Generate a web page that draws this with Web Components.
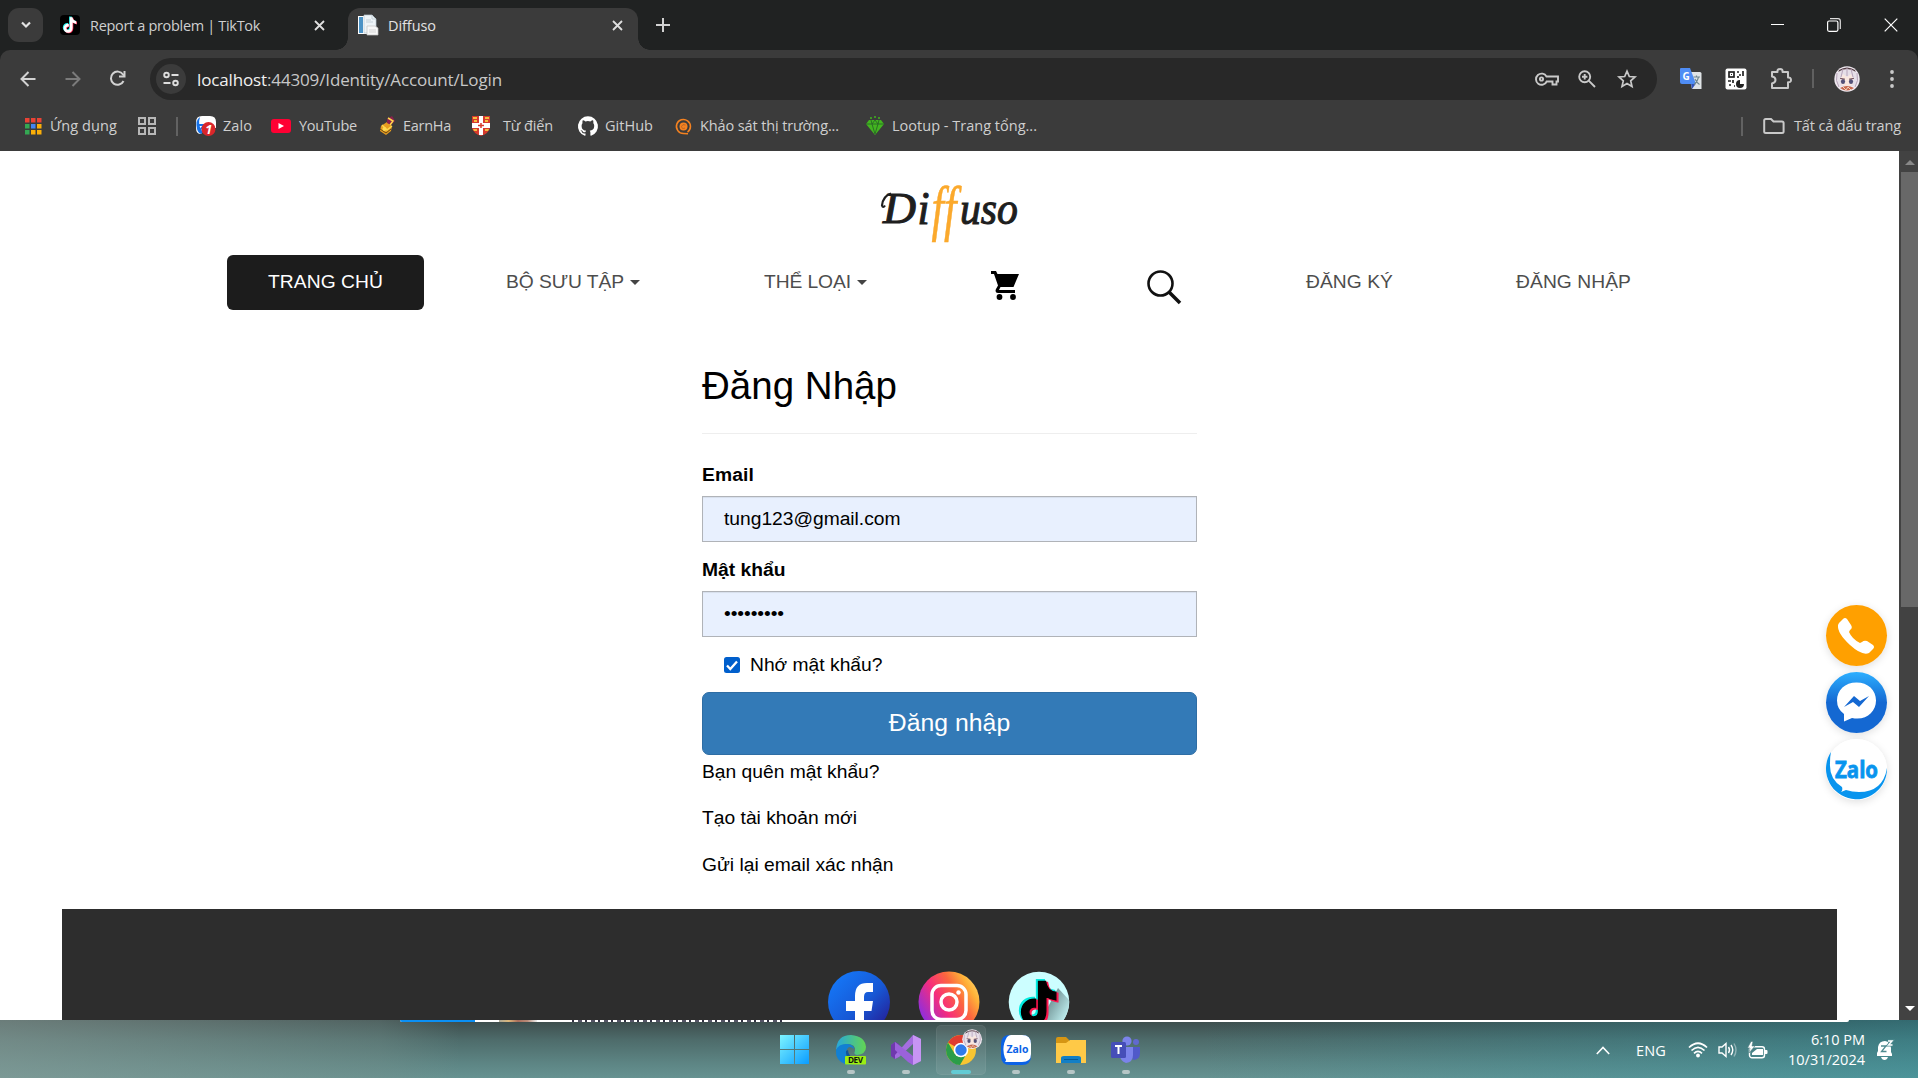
<!DOCTYPE html>
<html lang="vi">
<head>
<meta charset="utf-8">
<title>Diffuso</title>
<style>
html,body{margin:0;padding:0;background:#202222}
body{width:1918px;height:1078px;overflow:hidden;font-family:"Open Sans","Noto Sans",sans-serif}
</style>
</head>
<body>
<desktop-screen></desktop-screen>
<script>
const AVATAR = `<circle cx="13" cy="13" r="12.7" fill="#efe8ef"/><path d="M5 4Q13-1 21 4L22 7Q13 1 4 7Z" fill="#553f45"/><path d="M4 6Q13 0 22 6Q25 14 22 20H4Q1 14 4 6" fill="#e6dfe8"/><path d="M7 12L9 8L13 11L17 8L19 12V18Q13 22 7 18Z" fill="#f9e7df"/><path d="M3 7Q1 15 5 21M23 7Q25 15 21 21M9 3L7 11M13 2V10M17 3L19 11" stroke="#b7a4b9" fill="none"/><ellipse cx="9" cy="15.5" rx="2.100" ry="2.600" fill="#525078"/><ellipse cx="17" cy="15.5" rx="2.100" ry="2.600" fill="#525078"/><path d="M6 12.3L11 13.2M15 13.2L20 12.3" stroke="#714f5b"/><path d="M6 22Q13 18 20 22Q13 27 6 22" fill="#c8694e"/><path d="M9 21L12 24L14 21L17 24" stroke="#f2d2bd" fill="none"/>`;
const NOTE = 'M10.2 3h2.6c.3 2.3 1.6 3.7 3.8 3.9v2.7c-1.400-.1-2.600-.6-3.700-1.300v5.400c0 3-2 4.700-4.500 4.700-2.600 0-4.500-2-4.500-4.500 0-2.700 2.200-4.700 5.200-4.500v2.800c-1.500-.3-2.500.6-2.500 1.700 0 1 .8 1.800 1.800 1.800 1.200 0 1.800-.8 1.800-2.100Z';
const ICONS = {
chevdown:[14,14,`<path d="M3 4.500L7 8.500L11 4.500" fill="none" stroke="#e3e3e3" stroke-width="2.200"/>`],
tiktok:[20,20,`<rect width="20" height="20" rx="4" fill="#000"/><g transform="translate(-.3 -.7)"><path transform="translate(-.8 -.7)" d="${NOTE}" fill="#25f4ee"/><path transform="translate(.7 .5)" d="${NOTE}" fill="#fe2c55"/><path d="${NOTE}" fill="#fff"/></g>`],
close:[11,11,`<path d="M1 1L10 10M10 1L1 10" stroke="#dfdfdf" stroke-width="1.800"/>`],
plus:[14,14,`<path d="M7 0V14M0 7H14" stroke="#d2d2d2" stroke-width="2"/>`],
doc:[20,20,`<path d="M0 1H12V19H0Z" fill="#fff"/><path d="M1 2H5V18H1Z" fill="#4b92c5"/><path d="M6 0H14L18 4V18H6Z" fill="#eef4f8" stroke="#b8c6d0" stroke-width=".7"/><path d="M14 0V4H18M8 5H13M8 7H15" fill="none" stroke="#c4d0d8"/><path d="M9 11H17L20 13V20H9Z" fill="#f8f8f8" stroke="#c2c2c2" stroke-width=".7"/><path d="M11 15H18M11 17H18" stroke="#d5d5d5"/>`],
min:[13,13,`<path d="M0 6.500H13" stroke="#fff"/>`],
max:[14,14,`<rect x=".6" y="3" width="10.300" height="10.300" rx="1.500" fill="none" stroke="#fff" stroke-width="1.200"/><path d="M3 .700H11Q13.300.700 13.300 3V11" fill="none" stroke="#ddd" stroke-width="1.200"/>`],
wclose:[14,14,`<path d="M.700.700L13.300 13.300M13.300.700L.700 13.300" stroke="#fff" stroke-width="1.200"/>`],
back:[16,16,`<path d="M15.500 8H2M8.500 1L1.500 8L8.500 15" fill="none" stroke="#d2d2d2" stroke-width="2"/>`],
fwd:[16,16,`<path d="M.500 8H14M7.500 1L14.500 8L7.500 15" fill="none" stroke="#7b7b7b" stroke-width="2"/>`],
reload:[17,17,`<path d="M14.500 11A6.600 6.600 0 1 1 14 4.500L15 5.700" fill="none" stroke="#d2d2d2" stroke-width="2"/><path d="M15.500 1V6.500H10" fill="none" stroke="#d2d2d2" stroke-width="2"/>`],
tune:[16,16,`<g fill="none" stroke="#dedede" stroke-width="1.900"><circle cx="3.500" cy="4" r="2.300"/><path d="M8.500 4H15.500M.500 12H7.500"/><circle cx="12.500" cy="12" r="2.300"/></g>`],
key:[24,14,`<g fill="none" stroke="#c9c9c9" stroke-width="1.900"><path d="M11.500 4.500H23V9.500H21.500V12.500H17.500V9.500H11.700A5.600 5.600 0 1 1 11.500 4.500Z"/><circle cx="6.500" cy="7" r="1.600"/></g>`],
zoom:[18,18,`<g fill="none" stroke="#c9c9c9" stroke-width="1.900"><circle cx="6.700" cy="6.700" r="5.500"/><path d="M10.700 10.700L17 17M6.700 4V9.400M4 6.700H9.400"/></g>`],
star:[20,20,`<path d="M10 2.200L12.300 7.500L18 8L13.700 11.800L15 17.400L10 14.400L5 17.400L6.300 11.800L2 8L7.700 7.500Z" fill="none" stroke="#c9c9c9" stroke-width="1.700"/>`],
translate:[22,22,`<path d="M8 4H20Q21.500 4 21.500 5.500V21H12Z" fill="#dfe3e6"/><path d="M11 15.500H16L12 21Z" fill="#3051b8"/><path d="M1 0H10L16 16H2Q0 16 0 14V1Q0 0 1 0Z" fill="#4f8df5"/><text x="2.600" y="12" font-size="10" font-weight="700" fill="#fff" font-family="Open Sans,sans-serif">G</text><path d="M13.500 9H20M16.500 7.500V9M18.500 9Q17.500 14 14 16.500M15 11Q17 15 19.500 16.500" stroke="#6f8790" fill="none" stroke-width="1.200"/>`],
qr:[22,22,`<rect x=".500" y=".500" width="21" height="21" rx="2" fill="#fff"/><g fill="none" stroke="#222" stroke-width="1.700"><rect x="4" y="4" width="5" height="5"/><path d="M12 4H14M18 3V8M13 8V10M14 7H16M3 13H6M8 12V15M4 17H6M9 18H10"/></g><path d="M6 6H7V7H6M15 12V16H19A4 4 0 1 1 15 12" fill="#222"/>`],
puzzle:[22,22,`<path d="M2 4H7.500Q7 1 10 1Q13 1 12.500 4H18V9.500Q21 9.300 21 12Q21 14.500 18 14.300V20H2V15.500Q5.500 14.500 5.500 12Q5.500 9 2 8.500Z" fill="none" stroke="#c9c9c9" stroke-width="2" stroke-linejoin="round"/>`],
avatar:[26,26,AVATAR],
dots:[6,20,`<g fill="#c9c9c9"><circle cx="3" cy="3" r="1.900"/><circle cx="3" cy="10" r="1.900"/><circle cx="3" cy="17" r="1.900"/></g>`],
apps:[17,17,`<g><path d="M0 0H4.500V4.500H0M6 0H10.500V4.500H6M12 0H16.500V4.500H12" fill="#ea4335"/><path d="M0 6H4.500V10.500H0M0 12H4.500V16.500H0" fill="#34a853"/><path d="M6 6H10.500V10.500H6" fill="#4285f4"/><path d="M12 6H16.500V10.500H12M6 12H10.500V16.500H6M12 12H16.500V16.500H12" fill="#fbaf08"/></g>`],
grid:[18,18,`<g fill="none" stroke="#b7b7b7" stroke-width="2"><path d="M1 1H7V7H1ZM11 1H17V7H11ZM1 11H7V17H1ZM11 11H17V17H11Z"/></g>`],
zalobm:[20,20,`<path d="M6 0H14Q20 0 20 6V12H9L5 18Q0 18 0 12V6Q0 0 6 0" fill="#fff"/><path d="M4 1Q-1 4 1 13Q2 17 5 18L7 16Q1 10 4 1" fill="#1672e8"/><path d="M3 9H8L4 14" stroke="#1672e8" fill="none" stroke-width="1.800"/><circle cx="12.500" cy="13" r="7" fill="#d9262b"/><text x="9.300" y="17.500" font-size="12.500" font-weight="700" fill="#fff" font-family="Open Sans,sans-serif">1</text>`],
yt:[20,14,`<rect width="20" height="14" rx="3" fill="#ff0033"/><path d="M7.500 4L13 7L7.500 10Z" fill="#fff"/>`],
earn:[18,20,`<path d="M2 10L8 6L13 10L12 15L7 19L1 15Z" fill="#e79d20"/><path d="M1 13L7 17L12 13" stroke="#674814" fill="none"/><path d="M8 3L13 0L16 5L12 9L8 7Z" fill="#8a214e"/><path d="M9 2L14 5L11 9M3 9L8 14L13 10" fill="none" stroke="#ffd74b" stroke-width="1.500"/><circle cx="5.500" cy="13" r="2" fill="#ffda52"/>`],
shield:[18,20,`<path d="M0 0H18V12Q17 17 9 20Q1 17 0 12Z" fill="#d63a2c"/><path d="M7 0H11V7H18V12H11V19H7V12H0V7H7Z" fill="#fff"/><g fill="#f5bd3f"><path d="M1 1H5V3H1ZM13 1H17V3H13ZM2 4H5V6H2ZM13 4H16V6H13ZM1 13H5V15H2ZM13 13H17L16 15H13Z"/></g><path d="M9 7V12M6 9.500H12" stroke="#d63a2c" stroke-width="1.500"/>`],
github:[20,20,`<path d="M10 .300a10 10 0 0 0-3.200 19.500c.5.100.7-.2.700-.5v-1.900c-2.800.6-3.400-1.200-3.400-1.200-.5-1.100-1.100-1.400-1.100-1.400-.9-.6.100-.6.100-.6 1 .1 1.500 1 1.500 1 .9 1.600 2.400 1.100 2.900.9.100-.7.400-1.100.6-1.300-2.200-.3-4.500-1.100-4.500-5 0-1.100.4-2 1-2.700-.1-.3-.4-1.300.1-2.700 0 0 .8-.3 2.700 1a9.500 9.500 0 0 1 5 0c1.900-1.300 2.700-1 2.700-1 .5 1.400.2 2.400.1 2.700.6.700 1 1.600 1 2.700 0 3.900-2.300 4.700-4.500 4.900.4.300.7.900.7 1.900v2.700c0 .3.200.6.700.5A10 10 0 0 0 10 .300Z" fill="#fff"/>`],
survey:[17,17,`<path d="M12.500 14.200A7 7 0 1 0 8.500 15.500L13 15.700" fill="none" stroke="#f58220" stroke-width="1.600"/><circle cx="8.500" cy="8.500" r="4" fill="#f58220"/><path d="M10.500 7Q7.500 5.500 6.500 8.500Q7 11.500 10 10" fill="none" stroke="#a9602a" stroke-width=".8"/>`],
gem:[20,20,`<path d="M1 8L4 4H16L19 8L10 19Z" fill="#42b51f"/><path d="M1 8H19M6 4L7 8L10 18L13 8L14 4M7 8L10 4L13 8" stroke="#286626" stroke-width=".9" fill="none"/><g fill="#42b51f"><circle cx="6" cy="2" r="1"/><circle cx="10" cy="1" r="1"/><circle cx="14" cy="2" r="1"/></g>`],
folder:[22,16,`<path d="M1.200 2.500Q1.200 1 2.700 1H8L10.500 3.500H19Q20.600 3.500 20.600 5V13.500Q20.600 15 19 15H2.700Q1.200 15 1.200 13.500Z" fill="none" stroke="#c9c9c9" stroke-width="2"/>`],
cart:[28,29,`<path d="M0 0H5L6.500 3H28L22.500 16H9.500L8 19H24V22H7Q3.500 22 5 18L7 14.500L3 3H0Z" fill="#000"/><circle cx="8.500" cy="26" r="2.900"/><circle cx="22" cy="26" r="2.900"/>`],
search:[34,34,`<circle cx="13.500" cy="13.500" r="12" fill="none" stroke="#111" stroke-width="2.600"/><path d="M22 22L33 33" stroke="#111" stroke-width="3.600"/>`],
logo:[144,60,`<g font-family="Liberation Serif,serif" font-style="italic" fill="#1e1e1e" stroke="#1e1e1e" stroke-width="1.100"><text x="5" y="39" font-size="45" textLength="33" lengthAdjust="spacingAndGlyphs">D</text><path d="M13 9.500Q5 12 4 21.500Q5 24.500 7 21.500" fill="none" stroke-width="2.200"/><text x="39.500" y="40" font-size="46" textLength="12" lengthAdjust="spacingAndGlyphs">i</text><text x="82" y="40" font-size="46" textLength="58" lengthAdjust="spacingAndGlyphs">uso</text></g><g font-family="Liberation Serif,serif" font-style="italic" font-size="61" fill="#fba92c"><text x="53.500" y="44.500" textLength="25" lengthAdjust="spacingAndGlyphs" stroke="#fba92c" stroke-width=".5">ff</text></g>`],
phone:[61,61,`<circle cx="30.500" cy="30.500" r="30.500" fill="#ffa000"/><path d="M13 18L17 14Q19 12 21 14L25 20Q27 23 24 25L23 27Q26 34 34 38L36 37Q38 35 41 36L47 40Q49 42 47 44L43 48Q36 51 24 40Q11 28 12 20Z" fill="#fff"/>`],
messenger:[61,61,`<defs><linearGradient id="m" x2="0" y2="1"><stop offset="0" stop-color="#2cafff"/><stop offset=".5" stop-color="#1468d2"/><stop offset="1" stop-color="#1468d2"/></linearGradient></defs><circle cx="30.500" cy="30.500" r="30.500" fill="url(#m)"/><path d="M30.500 10.500C19 10.500 11 18 11 28.500Q11 37 18 42V49.500L26 46C40 49 50 40 50 28.500C50 18 42 10.500 30.500 10.500Z" fill="#fff"/><path d="M18 35L28 24L34 29L43 24L33 35L27 30Z" fill="#1468d2"/>`],
zalo:[61,61,`<circle cx="30.500" cy="30.500" r="30.500" fill="#fff"/><path d="M5 13A30.500 30.500 0 1 0 61 29Q57 53 33 53Q26 53 20 51L15 53Q17 51 16 48Q3 40 4 24Q4 17 5 13Z" fill="#0894ee"/><text x="9" y="39" font-family="Open Sans,sans-serif" font-size="22.500" font-weight="700" textLength="43" lengthAdjust="spacingAndGlyphs" fill="#0894ee" stroke="#0894ee" stroke-width=".8">Zalo</text>`],
fb:[62,62,`<defs><linearGradient id="f" x2="1" y2="1"><stop offset="0" stop-color="#147eff"/><stop offset=".55" stop-color="#1758d5"/><stop offset="1" stop-color="#271088"/></linearGradient></defs><circle cx="31" cy="31" r="31" fill="url(#f)"/><path d="M27 62V40H18V30H27V25Q27 12 39 12H45V21H40Q36 21 36 26V30H45L43.500 40H36V62Z" fill="#fff"/>`],
ig:[62,62,`<defs><linearGradient id="i" x1="0" y1=".8" x2="1" y2=".2"><stop offset="0" stop-color="#7b2ef0"/><stop offset=".4" stop-color="#f62d7c"/><stop offset=".65" stop-color="#fc653f"/><stop offset=".85" stop-color="#ffb238"/><stop offset="1" stop-color="#ffd56b"/></linearGradient></defs><circle cx="31" cy="31" r="30.500" fill="url(#i)"/><rect x="14" y="14.500" width="34" height="34" rx="9" fill="none" stroke="#fff" stroke-width="3.500"/><circle cx="31" cy="31" r="8" fill="none" stroke="#fff" stroke-width="3.500"/><circle cx="40.500" cy="21.500" r="2.200" fill="#fff"/>`],
ttbig:[62,62,`<defs><linearGradient id="t" x1=".2" y1=".2" x2="1" y2=".8"><stop offset="0" stop-color="#5c7a7c"/><stop offset="1" stop-color="#ccfeff"/></linearGradient></defs><circle cx="31" cy="31" r="30.300" fill="#ccfeff"/><path d="M50 17L61 29Q61 50 45 58L30 55Z" fill="url(#t)"/><g transform="translate(3 2) scale(2.700 2.800)"><path transform="translate(-.6 -.5)" d="${NOTE}" fill="#00eadf" stroke="#00eadf" stroke-width=".8"/><path transform="translate(.6 .5)" d="${NOTE}" fill="#ff154e" stroke="#ff154e" stroke-width=".8"/><path d="${NOTE}" fill="#000" stroke="#000" stroke-width=".500"/></g>`],
win:[30,30,`<defs><linearGradient id="w" x2="1" y2="1"><stop offset="0" stop-color="#7df4ff"/><stop offset="1" stop-color="#0a9cff"/></linearGradient></defs><path d="M0 0H14V14H0ZM15 0H29V14H15ZM0 15H14V29H0ZM15 15H29V29H15Z" fill="url(#w)"/>`],
edge:[30,30,`<defs><linearGradient id="e" x2="1"><stop offset="0" stop-color="#27a7dc"/><stop offset="1" stop-color="#63d552"/></linearGradient></defs><path d="M0 15Q1 0 15 0Q29 1 30 12Q30 19 21 20Q17 19 19 16Q20 9 11 9Q3 10 0 15Z" fill="url(#e)"/><path d="M0 15Q3 8 12 9Q18 10 18 14Q12 9 10 17Q11 25 22 27Q16 31 9 29Q-1 25 0 15Z" fill="#1280d3"/><path d="M10 16Q9 25 22 27L27 22Q12 25 12 15Z" fill="#11549b"/><rect x="9" y="21" width="21" height="8.500" rx="1" fill="#9cee13"/><text x="12" y="28.300" font-family="Open Sans,sans-serif" font-size="8.200" font-weight="700" fill="#111" textLength="15">DEV</text>`],
vs:[30,30,`<path d="M0 10L4 7L22 22V29L18 27L4 15V24L0 21Z" fill="#8254c2"/><path d="M4 7L8 9V22L4 24L0 21V10Z" fill="#6f39ad"/><path d="M22 0L30 4V26L22 30V9L8 22L4 24L4 20Z" fill="#a46ee0"/><path d="M22 0L30 4V26L22 30Z" fill="#c795f4"/><path d="M4 7L22 21V30L17 27L4 15Z" fill="#9b62da"/>`],
chrome:[30,30,`<circle cx="15" cy="15" r="15" fill="#f9c531"/><path d="M15 15L2 7.500A15 15 0 0 1 28 7.500Z" fill="#df3d30"/><path d="M2 7.500A15 15 0 0 0 14 30L21 18L8.500 18.500Z" fill="#2b9d48"/><circle cx="15" cy="15" r="7.300" fill="#fff"/><circle cx="15" cy="15" r="5.700" fill="#307bea"/>`],
zalotb:[30,30,`<path d="M9 0H21Q30 0 30 9V21Q30 30 21 30H9Q0 30 0 21V9Q0 0 9 0" fill="#0b62e7"/><path d="M10 0H21Q30 0 30 9V19Q30 27 21 27H9L4 27Q6 25 4 23Q0 12 6 2Q8 0 10 0" fill="#fff"/><text x="5.500" y="17.500" font-family="Open Sans,sans-serif" font-size="9.800" font-weight="700" fill="#0b62e7" textLength="22" lengthAdjust="spacingAndGlyphs">Zalo</text>`],
explorer:[30,30,`<path d="M0 4Q0 2 2 2H10L13 5V10H0Z" fill="#d69513"/><path d="M0 8H10L14 5H30V28H0Z" fill="#ffc947"/><path d="M5 28V23Q5 21 8 21H22Q25 21 25 23V28Z" fill="#137fc5"/><path d="M8 24.500H22" stroke="#075a96"/>`],
teams:[30,30,`<circle cx="25" cy="7" r="3" fill="#6169cf"/><circle cx="16" cy="6" r="4.600" fill="#7b83eb"/><path d="M18 12H29V18Q29 25 22 25Z" fill="#5059c9"/><path d="M10 12H22V20Q22 27 15 28Q9 26 9 20Z" fill="#7b83eb"/><rect y="7" width="15" height="16" rx="1.500" fill="#464eb8"/><path d="M4 11H11M7.500 11V19" stroke="#fff" stroke-width="2"/>`],
up:[14,9,`<path d="M.8 8L7 1.500L13.200 8" fill="none" stroke="#fff" stroke-width="1.600"/>`],
wifi:[20,16,`<g fill="none" stroke="#fff" stroke-width="1.700"><path d="M1 5.500Q10-3 19 5.500M3.500 8.500Q10 2 16.500 8.500M6 11.300Q10 7.500 14 11.300"/></g><circle cx="10" cy="13.500" r="1.900" fill="#fff"/>`],
vol:[20,16,`<g fill="none" stroke="#fff" stroke-width="1.400"><path d="M1 5H4L8 1.500V14.500L4 11H1Z"/><path d="M10.500 5Q12.500 8 10.500 11M13 3Q16.500 8 13 13"/><path d="M16 1.500Q20 8 16 14.500" opacity=".4"/></g>`],
bat:[20,17,`<rect x="1.500" y="4.700" width="15" height="11" rx="2.500" fill="none" stroke="#fff" stroke-width="1.400"/><path d="M4 13V11L9 7H15V13Z" fill="#fff"/><path d="M17 8H18.500Q19.500 8 19.500 9V11Q19.500 12 18.500 12H17Z" fill="#fff"/><path d="M3-.5L-.5 6H2L1 11L7 4H4L5-.5Z" fill="#fff" stroke="#4d7c80" stroke-width=".6"/>`],
bell:[18,20,`<path d="M1 16V13L2 11V7Q3 1 9 1Q15 2 15 8V12L16 14V16Z" fill="#fff"/><path d="M5 17H12Q11 20 8.500 20Q6 20 5 17Z" fill="#fff"/><path d="M5 6H10L5.500 11.500H10.500" fill="none" stroke="#4f8b90" stroke-width="1.300"/><path d="M12 1H16L12.500 5H16.500" fill="none" stroke="#4f8b90" stroke-width="3"/><path d="M12 1H16L12.500 5H16.500" fill="none" stroke="#fff" stroke-width="1.400"/>`]
};
const def=(tag,html,after)=>customElements.define(tag,class extends HTMLElement{
  connectedCallback(){ if(this.shadowRoot) return; this.attachShadow({mode:'open'}).innerHTML=typeof html==='function'?html(this):html; if(after) after(this); }
});
def('ui-icon',el=>{const [w,h,b]=ICONS[el.getAttribute('name')];const k=+(el.getAttribute('scale')||1);
  return `<style>:host{display:block;flex:none;width:${w*k}px;height:${h*k}px}svg{display:block;overflow:visible}</style><svg width="${w*k}" height="${h*k}" viewBox="0 0 ${w} ${h}">${b}</svg>`;});
/* Text that tracks its letters so that the run fills a given width. */
def('fit-text',`<style>:host{display:inline-block;white-space:nowrap;flex:none}</style><slot></slot>`,el=>{
  const w=+el.getAttribute('w'),n=el.getBoundingClientRect().width,c=[...el.textContent].length;
  if(w&&n) el.style.letterSpacing=((w-n)/c).toFixed(3)+'px';
});
def('browser-tab',`<style>
:host{display:flex;align-items:center;box-sizing:border-box;height:42px;padding:0 12px 8px;color:#cfcfcf;font-size:14.500px;line-height:20px}
:host([active]){background:#3b3b3b;color:#e3e3e3;border-radius:12px 12px 0 0;position:relative}
:host([active])::before,:host([active])::after{content:"";position:absolute;bottom:0;width:12px;height:12px}
:host([active])::before{left:-12px;background:radial-gradient(circle at 0 0,transparent 11.500px,#3b3b3b 12px)}
:host([active])::after{right:-12px;background:radial-gradient(circle at 100% 0,transparent 11.500px,#3b3b3b 12px)}
.t{margin-left:10px;padding-top:1px;flex:1}</style><slot name="icon"></slot><span class="t"><slot></slot></span><ui-icon name="close"></ui-icon>`);
def('tab-strip',`<style>:host{display:flex;height:50px;align-items:flex-end;background:#202222}
.dd{width:35px;height:34px;border-radius:11px;background:#3b3b3b;margin:0 5px 8px 8px;display:flex;align-items:center;justify-content:center}
.plus{margin:0 0 18px 18px}.wc{margin-left:auto;display:flex;gap:43px;margin-right:20px;align-self:center}</style>
<div class="dd"><ui-icon name="chevdown"></ui-icon></div>
<browser-tab style="width:290px;padding-right:13px"><ui-icon slot="icon" name="tiktok"></ui-icon><fit-text w="170">Report a problem | TikTok</fit-text></browser-tab>
<browser-tab active style="width:290px;margin-left:10px;padding-left:10px;padding-right:15px"><ui-icon slot="icon" name="doc"></ui-icon><fit-text w="48">Diffuso</fit-text></browser-tab>
<ui-icon class="plus" name="plus"></ui-icon>
<div class="wc"><ui-icon name="min"></ui-icon><ui-icon name="max"></ui-icon><ui-icon name="wclose"></ui-icon></div>`);
def('address-bar',`<style>:host{display:flex;align-items:center;height:51px;background:#3b3b3b;border-radius:10px 10px 0 0;box-sizing:border-box;padding:6px 0 0 20px}
.box{flex:none;width:1507px;height:42px;border-radius:21px;background:#282828;display:flex;align-items:center;box-sizing:border-box;padding:0 20px 0 6px;margin-left:24px}
.tune{width:30px;height:30px;border-radius:50%;background:#3b3b3b;display:flex;align-items:center;justify-content:center}
.url{margin:2px 0 0 11px;font-size:17px;line-height:24px;color:#c7c7c7;flex:1}.url b{font-weight:400;color:#f0f0f0}
.sep{width:2px;height:19px;background:#606060;margin-left:20px}</style>
<ui-icon name="back"></ui-icon><ui-icon name="fwd" style="margin-left:29px"></ui-icon><ui-icon name="reload" style="margin-left:28px"></ui-icon>
<div class="box"><div class="tune"><ui-icon name="tune"></ui-icon></div><span class="url"><fit-text w="305"><b>localhost</b>:44309/Identity/Account/Login</fit-text></span>
<ui-icon name="key"></ui-icon><ui-icon name="zoom" style="margin-left:19px"></ui-icon><ui-icon name="star" style="margin-left:21px"></ui-icon></div>
<ui-icon name="translate" style="margin-left:23px"></ui-icon><ui-icon name="qr" style="margin-left:23px"></ui-icon><ui-icon name="puzzle" style="margin-left:23px"></ui-icon><div class="sep"></div><ui-icon name="avatar" style="margin-left:20px"></ui-icon><ui-icon name="dots" style="margin-left:29px"></ui-icon>`);
/* A bookmark: its icon cell is as wide as the offset of its label. */
def('book-mark',el=>`<style>:host{display:flex;align-items:center;flex:none;width:${el.getAttribute('w')}px}i{width:${el.getAttribute('t')}px;flex:none}</style><i><ui-icon name="${el.getAttribute('icon')}"></ui-icon></i><slot></slot>`);
def('bookmark-bar',`<style>:host{display:flex;align-items:center;height:50px;background:#3b3b3b;padding-left:25px;color:#cfcfcf;font-size:14.500px;line-height:22px;box-sizing:border-box}
.s{width:2px;height:19px;background:#626262;flex:none}.end{margin-left:auto;display:flex;align-items:center;width:177px}</style>
<book-mark icon="apps" w="113" t="25"><fit-text w="67">Ứng dụng</fit-text></book-mark><ui-icon name="grid"></ui-icon><div class="s" style="margin:0 18px 0 20px"></div>
<book-mark icon="zalobm" w="75" t="27"><fit-text w="29">Zalo</fit-text></book-mark>
<book-mark icon="yt" w="108" t="28"><fit-text w="58">YouTube</fit-text></book-mark>
<book-mark icon="earn" w="93" t="24"><fit-text w="48">EarnHa</fit-text></book-mark>
<book-mark icon="shield" w="106" t="31"><fit-text w="50">Từ điển</fit-text></book-mark>
<book-mark icon="github" w="97" t="27"><fit-text w="48">GitHub</fit-text></book-mark>
<book-mark icon="survey" w="190" t="25"><fit-text w="139">Khảo sát thị trường...</fit-text></book-mark>
<book-mark icon="gem" w="180" t="27"><fit-text w="145">Lootup - Trang tổng...</fit-text></book-mark>
<div class="end"><div class="s" style="margin-right:20px"></div><book-mark icon="folder" w="150" t="31"><fit-text w="107">Tất cả dấu trang</fit-text></book-mark></div>`);
def('nav-item',`<style>:host{display:flex;align-items:center;height:55px;box-sizing:border-box;padding-bottom:1px;flex:none;color:#4d4d4d}
:host([active]){background:#1c1c1c;color:#fff;border-radius:6px;justify-content:center;width:197px}
i{display:none}:host([menu]) i{display:block;margin-left:6px;border:5px solid transparent;border-top-color:#444;border-bottom:0}</style><slot></slot><i></i>`);
def('site-header',`<style>:host{display:flex;flex-direction:column;font-size:19.250px}.logo{display:flex;justify-content:center;padding-top:33px;height:71px}
nav{display:flex;align-items:center;padding-left:227px}</style>
<div class="logo"><ui-icon name="logo"></ui-icon></div>
<nav><nav-item active><fit-text w="115">TRANG CHỦ</fit-text></nav-item><nav-item menu style="margin-left:82px"><fit-text w="118">BỘ SƯU TẬP</fit-text></nav-item><nav-item menu style="margin-left:124px"><fit-text w="87">THỂ LOẠI</fit-text></nav-item>
<nav-item style="margin-left:124px"><ui-icon name="cart" style="margin-top:7px"></ui-icon></nav-item><nav-item style="margin-left:128px"><ui-icon name="search" style="margin-top:9px"></ui-icon></nav-item>
<nav-item style="margin-left:125px"><fit-text w="87">ĐĂNG KÝ</fit-text></nav-item><nav-item style="margin-left:123px"><fit-text w="115">ĐĂNG NHẬP</fit-text></nav-item></nav>`);
def('text-field',`<style>:host{display:flex;flex-direction:column}label{font-weight:700;height:26px;line-height:28px;margin-bottom:9px}
div{height:46px;box-sizing:border-box;border:1px solid #b0b3b8;background:#e8f0fe;box-shadow:inset 0 1px 1px rgba(0,0,0,.075);padding:0 21px;line-height:43px}</style><label><slot name="label"></slot></label><div><slot></slot></div>`);
def('login-form',`<style>:host{display:flex;flex-direction:column;width:495px;margin-left:702px;padding-top:54px;font-size:19.250px;line-height:26px;color:#000}
h1{font-size:38.500px;font-weight:400;line-height:44px;margin:0}hr{border:0;height:1px;background:#eee;margin:25px 0 27px;width:100%}
text-field{margin-bottom:14px}.ck{display:flex;align-items:center;gap:10px;padding-left:22px;height:26px}.ck fit-text{margin-top:2px}
.box{width:16px;height:16px;border-radius:2.500px;background:#005fcc;margin-top:2px}.box svg{display:block}
.btn{height:63px;box-sizing:border-box;border:1px solid #2e6da4;border-radius:7px;background:#337ab7;color:#fff;font-size:24.750px;line-height:60px;text-align:center;margin:15px 0 3.500px}
a{display:block;height:26px;margin-bottom:20.500px}</style>
<h1><fit-text w="195">Đăng Nhập</fit-text></h1><hr>
<text-field><fit-text slot="label" w="52">Email</fit-text><fit-text w="176.500">tung123@gmail.com</fit-text></text-field>
<text-field><fit-text slot="label" w="83.500">Mật khẩu</fit-text><fit-text w="60">•••••••••</fit-text></text-field>
<div class="ck"><span class="box"><svg width="16" height="16" viewBox="0 0 16 16"><path d="M3 8.500L6.300 12L13 4.500" fill="none" stroke="#fff" stroke-width="2.300"/></svg></span><fit-text w="132.500">Nhớ mật khẩu?</fit-text></div>
<div class="btn"><fit-text w="121.500">Đăng nhập</fit-text></div>
<a><fit-text w="177.500">Bạn quên mật khẩu?</fit-text></a><a><fit-text w="155">Tạo tài khoản mới</fit-text></a><a><fit-text w="191.500">Gửi lại email xác nhận</fit-text></a>`);
def('site-footer',`<style>:host{display:flex;justify-content:center;gap:28px;background:#2d2d2d;height:111px;width:1775px;margin-left:62px;padding:62px 1px 0 0;box-sizing:border-box;overflow:hidden}</style>
<ui-icon name="fb"></ui-icon><ui-icon name="ig"></ui-icon><ui-icon name="ttbig"></ui-icon>`);
def('contact-dock',`<style>:host{position:absolute;right:12.500px;top:454px;display:flex;flex-direction:column;gap:6px}ui-icon{border-radius:50%;box-shadow:0 2px 8px rgba(0,0,0,.13)}</style><ui-icon name="phone"></ui-icon><ui-icon name="messenger"></ui-icon><ui-icon name="zalo"></ui-icon>`);
def('scroll-bar',`<style>:host{display:flex;flex-direction:column;align-items:center;width:19px;background:#424242;box-sizing:border-box;padding:9px 0 9px 2px}
i{border:5px solid transparent}.u{border-bottom-color:#888;border-top:0}.d{border-top-color:#fff;border-bottom:0;margin-top:auto}div{width:17px;height:435px;background:#686868;margin-top:7px}</style><i class="u"></i><div></div><i class="d"></i>`);
def('web-page',`<style>:host{display:flex;height:869px;background:#fff;font-family:"Liberation Sans",Arial,sans-serif}
main{width:1899px;position:relative;overflow:hidden;display:flex;flex-direction:column}site-footer{margin-top:auto}</style>
<main><site-header></site-header><login-form></login-form><site-footer></site-footer><contact-dock></contact-dock></main><scroll-bar></scroll-bar>`);
def('task-app',el=>`<style>:host{display:flex;flex-direction:column;align-items:center;width:50px;height:50px;margin-right:5px;padding-top:10px;box-sizing:border-box;border-radius:5px;position:relative}
:host([active]){background:rgba(255,255,255,.08);box-shadow:inset 0 0 0 1px rgba(255,255,255,.05)}
i{width:8px;height:4px;border-radius:2px;background:#b6c6c6;margin-top:5px}:host([active]) i{width:20px;background:#62cbd4}:host([idle]) i{display:none}
.b{position:absolute;left:26px;top:4px}</style><ui-icon name="${el.getAttribute('icon')}"></ui-icon><i></i>${el.hasAttribute('active')?'<ui-icon class="b" name="avatar" scale=".780"></ui-icon>':''}`);
def('task-bar',`<style>:host{display:flex;flex-direction:column;height:58px;color:#fff;background:linear-gradient(90deg,rgba(138,158,153,.6),rgba(120,145,140,.35) 380px,transparent 460px,transparent 1200px,rgba(40,150,165,.32) 1750px,rgba(40,150,165,.42)),linear-gradient(#3c4b4b,#4e6c6b 35%,#5d8584 75%,#669291)}
.edge{display:flex;height:2px;flex:none;margin-left:400px;width:1449px;background:#fff;border-radius:0 0 4px 4px;overflow:hidden}
.edge i{width:75px;background:#0a90f5}.edge u{width:38px;margin-left:24px;background:linear-gradient(90deg,#a9a797,#dcb77b,#a96d5b,#b98c7a,#eee)}
.edge s{width:210px;margin-left:35px;background:repeating-linear-gradient(90deg,#334 0 2px,#fff 2px 6px,#556 6px 10px,#fff 10px 13px)}
.row{display:flex;padding:3px 24px 0 770px}.tray{margin-left:auto;display:flex;align-items:center;height:50px}
.clock{display:flex;flex-direction:column;align-items:flex-end;font-size:14.500px;line-height:20px;margin-left:20px;margin-top:-1px}</style>
<div class="edge"><i></i><u></u><s></s></div>
<div class="row"><task-app idle icon="win"></task-app><task-app icon="edge" style="margin-left:1px"></task-app><task-app icon="vs"></task-app><task-app active icon="chrome"></task-app><task-app icon="zalotb"></task-app><task-app icon="explorer"></task-app><task-app icon="teams"></task-app>
<div class="tray"><ui-icon name="up"></ui-icon><fit-text w="30" style="font-size:14.500px;margin-left:26px">ENG</fit-text><ui-icon name="wifi" style="margin-left:22px"></ui-icon><ui-icon name="vol" style="margin-left:10px"></ui-icon><ui-icon name="bat" style="margin-left:10px"></ui-icon>
<div class="clock"><fit-text w="54">6:10 PM</fit-text><fit-text w="77">10/31/2024</fit-text></div><ui-icon name="bell" style="margin-left:11px"></ui-icon></div></div>`);
def('desktop-screen',`<style>:host{display:flex;flex-direction:column;width:1918px;height:1078px;overflow:hidden}</style><tab-strip></tab-strip><address-bar></address-bar><bookmark-bar></bookmark-bar><web-page></web-page><task-bar></task-bar>`);
</script>
</body>
</html>
